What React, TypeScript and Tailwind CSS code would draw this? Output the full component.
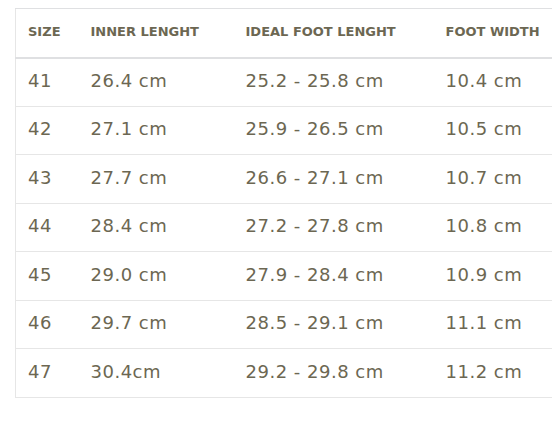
import React from "react";

const rows: [string, string, string, string][] = [
  ["41", "26.4 cm", "25.2 - 25.8 cm", "10.4 cm"],
  ["42", "27.1 cm", "25.9 - 26.5 cm", "10.5 cm"],
  ["43", "27.7 cm", "26.6 - 27.1 cm", "10.7 cm"],
  ["44", "28.4 cm", "27.2 - 27.8 cm", "10.8 cm"],
  ["45", "29.0 cm", "27.9 - 28.4 cm", "10.9 cm"],
  ["46", "29.7 cm", "28.5 - 29.1 cm", "11.1 cm"],
  ["47", "30.4cm", "29.2 - 29.8 cm", "11.2 cm"],
];

const headers = ["SIZE", "INNER LENGHT", "IDEAL FOOT LENGHT", "FOOT WIDTH"];

const App: React.FC = () => {
  return (
    <div className="min-h-screen bg-white overflow-hidden pt-2 pl-[15px] font-['DejaVu_Sans',sans-serif] text-[#6c6752]">
      <table className="border-collapse border-l border-[#e6e6e6] w-[578px] table-fixed">
        <colgroup>
          <col className="w-[63px]" />
          <col className="w-[155px]" />
          <col className="w-[200px]" />
          <col className="w-[160px]" />
        </colgroup>
        <thead>
          <tr className="border-t border-b-2 border-[#dfe0e2] h-[49px]">
            {headers.map((h) => (
              <th key={h} className="pl-3 pb-[2px] text-left text-[13px] font-bold whitespace-nowrap">
                {h}
              </th>
            ))}
          </tr>
        </thead>
        <tbody>
          {rows.map((row) => (
            <tr key={row[0]} className="border-b border-[#e6e6e6] h-[48.5px]">
              {row.map((cell, i) => (
                <td key={i} className="pl-3 pb-[3px] text-[18px] tracking-[0.5px] whitespace-nowrap">
                  {cell}
                </td>
              ))}
            </tr>
          ))}
        </tbody>
      </table>
    </div>
  );
};

export default App;
